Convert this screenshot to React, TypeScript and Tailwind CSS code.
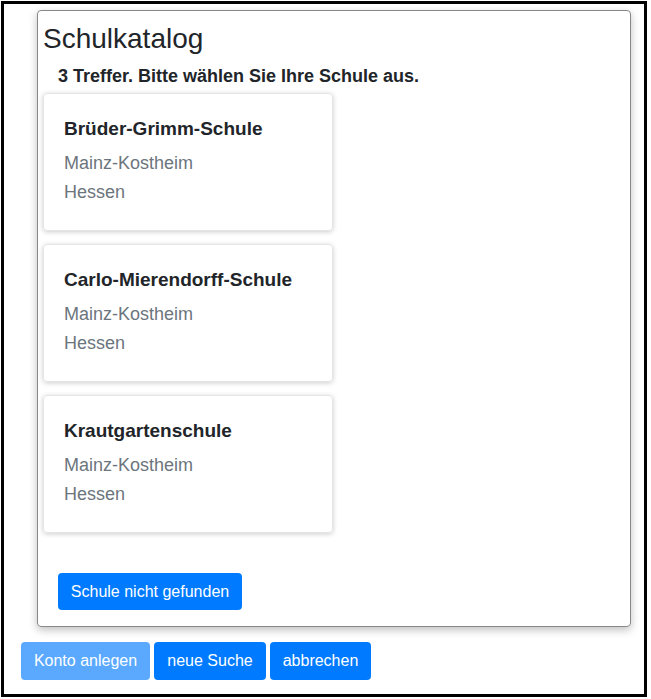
const schools = [
  { name: 'Brüder-Grimm-Schule', city: 'Mainz-Kostheim', state: 'Hessen' },
  { name: 'Carlo-Mierendorff-Schule', city: 'Mainz-Kostheim', state: 'Hessen' },
  { name: 'Krautgartenschule', city: 'Mainz-Kostheim', state: 'Hessen' },
];

export default function App() {
  return (
    <div className="ml-px mt-px h-[696px] w-[646px] border-[3px] border-black bg-white font-['Liberation_Sans',Arial,sans-serif] text-[#212529]">
      <div className="ml-[33px] mt-[6px] flex h-[617px] w-[594px] flex-col rounded border border-[#888] px-[5px] shadow-[0_3px_8px_rgba(0,0,0,0.25)]">
        <h3 className="mt-[11px] text-[28px] leading-[34px]">Schulkatalog</h3>
        <p className="mt-[7px] pl-[15px] text-lg font-bold leading-[27px]">
          3 Treffer. Bitte wählen Sie Ihre Schule aus.
        </p>
        <div className="mt-[3px] flex flex-col gap-[13px]">
          {schools.map((s) => (
            <div key={s.name} className="h-[138px] w-[290px] rounded border border-[#e5e5e5] px-5 pt-[23px] shadow-[0_1px_5px_rgba(0,0,0,0.2)]">
              <div className="text-[19px] font-bold leading-6">{s.name}</div>
              <div className="mt-[8px] text-lg leading-[29px] text-[#6c757d]">{s.city}</div>
              <div className="text-lg leading-[29px] text-[#6c757d]">{s.state}</div>
            </div>
          ))}
        </div>
        <div className="mt-[40px] pl-[15px]">
          <button className="h-[37px] w-[184px] rounded bg-[#007bff] text-base text-white">Schule nicht gefunden</button>
        </div>
      </div>
      <div className="ml-[17px] mt-[15px] flex gap-1">
        <button className="h-[38px] w-[129px] rounded bg-[#5aa9ff] text-base text-white">Konto anlegen</button>
        <button className="h-[38px] w-[112px] rounded bg-[#007bff] text-base text-white">neue Suche</button>
        <button className="h-[38px] w-[101px] rounded bg-[#007bff] text-base text-white">abbrechen</button>
      </div>
    </div>
  );
}
